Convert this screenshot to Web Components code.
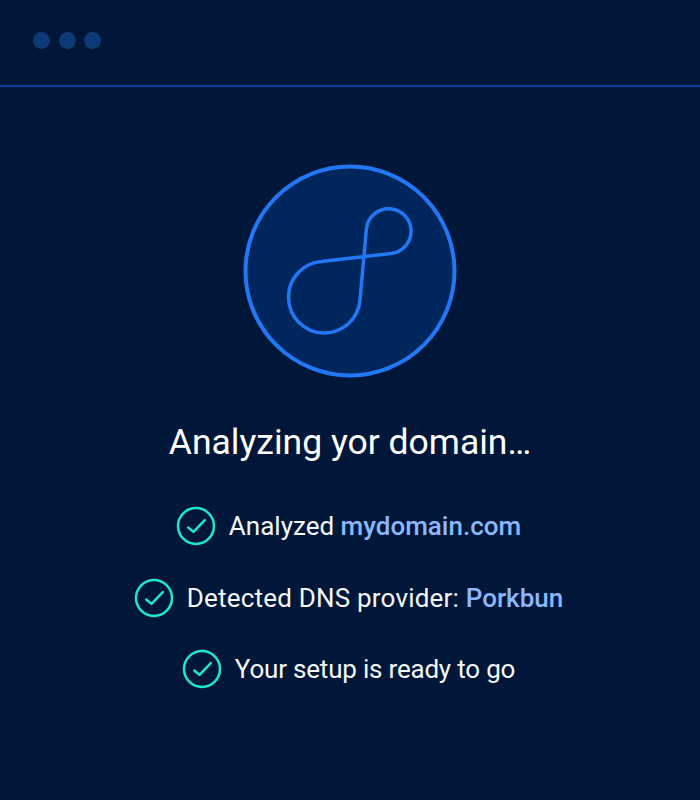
<!DOCTYPE html>
<html>
<head>
<meta charset="utf-8">
<style>
    html, body { margin: 0; background: #01173a; }
</style>
</head>
<body>
<setup-screen>
    <span slot="title">Analyzing yor domain…</span>
    <check-row>Analyzed <b>mydomain.com</b></check-row>
    <check-row style="--track: 0.2px">Detected DNS provider: <b>Porkbun</b></check-row>
    <check-row style="--track: -0.2px">Your setup is ready to go</check-row>
</setup-screen>
<script>
class WindowBar extends HTMLElement {
    constructor () {
        super();
        this.attachShadow({ mode: 'open' });
        this.shadowRoot.innerHTML = `
        <style>
            :host {
                display: flex;
                gap: 8.3px;
                box-sizing: border-box;
                height: 87px;
                padding: 32px 0 0 33.3px;
                border-bottom: 2px solid #0e3d99;
            }
            i {
                width: 17px;
                height: 17px;
                border-radius: 50%;
                background: #0f3a78;
            }
        </style>
        <i></i><i></i><i></i>
        `;
    }
}

class LogoBadge extends HTMLElement {
    constructor () {
        super();
        this.attachShadow({ mode: 'open' });
        this.shadowRoot.innerHTML = `
        <style>
            :host { display: block; width: 214px; height: 214px; }
            svg { display: block; }
        </style>
        <svg width="214" height="214" viewBox="243 163.5 214 214" fill="none" stroke="#2277f5">
            <circle cx="350" cy="270.5" r="104.5" fill="#00265e" stroke-width="4"/>
            <path stroke-width="3.5" d="M360 299.5 L366.4 228.5 A22.4 22.4 0 1 1 391 253 L321.5 261 A35.8 35.8 0 1 0 360 299.5 Z"/>
        </svg>
        `;
    }
}

class CheckRow extends HTMLElement {
    constructor () {
        super();
        this.attachShadow({ mode: 'open' });
        this.shadowRoot.innerHTML = `
        <style>
            :host {
                display: flex;
                align-items: center;
                justify-content: center;
                gap: 13px;
                height: 40px;
                padding-right: 3px;
                font-size: 26px;
                color: #f4f7fb;
            }
            svg { flex: none; }
            span { letter-spacing: var(--track, 0); }
            ::slotted(b) { font-weight: 500; color: #8ab8ff; letter-spacing: 0; }
        </style>
        <svg width="40" height="40" viewBox="0 0 40 40" fill="none" stroke="#1ee6cf" stroke-width="2.5">
            <circle cx="20" cy="20" r="18"/>
            <path stroke-linecap="round" stroke-linejoin="round" d="M12.2 21.5 L17.5 25.9 L28.8 14.2"/>
        </svg>
        <span><slot></slot></span>
        `;
    }
}

class SetupScreen extends HTMLElement {
    constructor () {
        super();
        this.attachShadow({ mode: 'open' });
        this.shadowRoot.innerHTML = `
        <style>
            :host {
                display: block;
                width: 700px;
                height: 800px;
                overflow: hidden;
                background: #01173a;
                font-family: Roboto, "Liberation Sans", sans-serif;
            }
            main {
                display: flex;
                flex-direction: column;
                align-items: center;
                padding-top: 77px;
            }
            h1 {
                margin: 42px 0 42px;
                font-size: 35.5px;
                line-height: 44px;
                font-weight: 400;
                color: #fff;
            }
            .rows {
                display: flex;
                flex-direction: column;
                gap: 31.5px;
            }
        </style>
        <window-bar></window-bar>
        <main>
            <logo-badge></logo-badge>
            <h1><slot name="title"></slot></h1>
            <div class="rows"><slot></slot></div>
        </main>
        `;
    }
}

customElements.define('window-bar', WindowBar);
customElements.define('logo-badge', LogoBadge);
customElements.define('check-row', CheckRow);
customElements.define('setup-screen', SetupScreen);
</script>
</body>
</html>
